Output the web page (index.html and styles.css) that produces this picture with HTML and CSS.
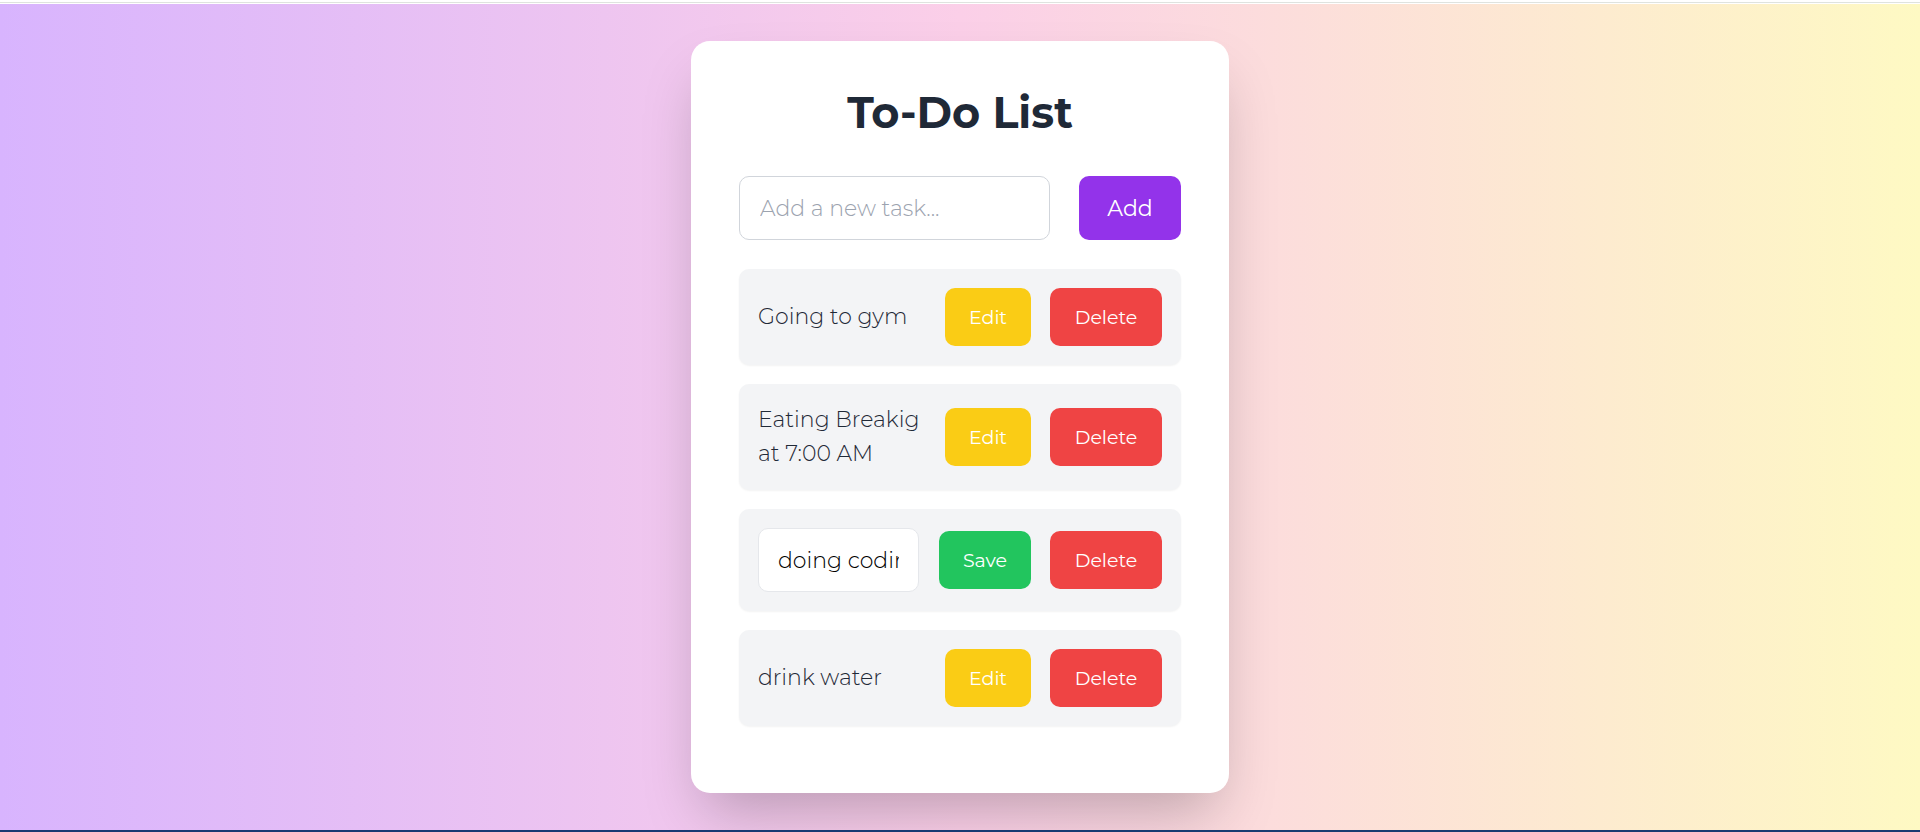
FILE: index.html
```html
<!DOCTYPE html>
<html lang="en">
<head>
<meta charset="utf-8">
<meta name="viewport" content="width=device-width, initial-scale=1">
<title>To-Do List</title>
<link rel="stylesheet" href="styles.css">
</head>
<body>
<div class="top-edge"></div>
<main class="page">
  <section class="card">
    <h1 class="title">To-Do List</h1>
    <form class="add-form">
      <input class="field" type="text" placeholder="Add a new task..." aria-label="New task">
      <button class="btn btn-add" type="button">Add</button>
    </form>
    <ul class="tasks">
      <li class="task">
        <span class="task-text">Going to gym</span>
        <div class="actions">
          <button class="btn btn-edit" type="button">Edit</button>
          <button class="btn btn-delete" type="button">Delete</button>
        </div>
      </li>
      <li class="task">
        <span class="task-text">Eating Breakig at 7:00 AM</span>
        <div class="actions">
          <button class="btn btn-edit" type="button">Edit</button>
          <button class="btn btn-delete" type="button">Delete</button>
        </div>
      </li>
      <li class="task">
        <input class="field field-edit" type="text" value="doing coding" aria-label="Edit task">
        <div class="actions">
          <button class="btn btn-save" type="button">Save</button>
          <button class="btn btn-delete" type="button">Delete</button>
        </div>
      </li>
      <li class="task">
        <span class="task-text">drink water</span>
        <div class="actions">
          <button class="btn btn-edit" type="button">Edit</button>
          <button class="btn btn-delete" type="button">Delete</button>
        </div>
      </li>
    </ul>
  </section>
</main>
</body>
</html>
```
FILE: styles.css
```css
* {
  box-sizing: border-box;
}

body {
  margin: 0;
  min-height: 100vh;
  display: flex;
  flex-direction: column;
  font-family: Montserrat, Inter, "Open Sans", sans-serif;
  border-bottom: 2px solid #1a3a72;
}

.top-edge {
  height: 4px;
  background: linear-gradient(#fff 2px, #dfe3df 2px, #dfe3df 3px, #fff 3px);
}

.page {
  flex: 1;
  display: flex;
  align-items: center;
  justify-content: center;
  overflow: hidden;
  background: linear-gradient(to right, #d8b4fe, #fbcfe8, #fef9c3);
}

.card {
  width: 100%;
  max-width: 538px;
  padding: 48px;
  border-radius: 19px;
  background: #fff;
  box-shadow: 0 30px 60px -14px rgba(0, 0, 0, 0.25);
}

.title {
  margin: 0 0 39px;
  font-size: 43px;
  line-height: 48px;
  font-weight: 700;
  text-align: center;
  color: #1f2937;
}

.add-form {
  display: flex;
  gap: 29px;
  margin-bottom: 29px;
}

.field {
  flex: 1;
  min-width: 0;
  height: 64px;
  padding: 0 20px;
  border: 1px solid #d1d5db;
  border-radius: 10px;
  background: #fff;
  color: #000;
  font-family: inherit;
  font-size: 22px;
  font-weight: 350;
}

.field::placeholder {
  color: #9ca3af;
  opacity: 1;
}

.field-edit {
  flex: 0 1 161px;
  padding: 0 19px;
  border-color: #e5e7eb;
}

.btn {
  height: 58px;
  padding: 0 14px;
  border: 0;
  border-radius: 10px;
  color: #fff;
  font-family: inherit;
  font-size: 19px;
  font-weight: 400;
}

.btn-add {
  min-width: 102px;
  height: 64px;
  background: #9333ea;
  font-size: 22px;
}

.btn-edit {
  min-width: 86px;
  background: #facc15;
}

.btn-save {
  min-width: 92px;
  background: #22c55e;
}

.btn-delete {
  min-width: 112px;
  background: #ef4444;
}

.tasks {
  margin: 0;
  padding: 0;
  list-style: none;
}

.task {
  display: flex;
  align-items: center;
  justify-content: space-between;
  margin-bottom: 19px;
  padding: 19px;
  border-radius: 10px;
  background: #f3f4f6;
  box-shadow: 0 1px 2px rgba(0, 0, 0, 0.05);
}

.task-text {
  flex: 0 1 170px;
  font-size: 22px;
  line-height: 34px;
  font-weight: 350;
  color: #1f2937;
}

.actions {
  display: flex;
  gap: 19px;
}
```
